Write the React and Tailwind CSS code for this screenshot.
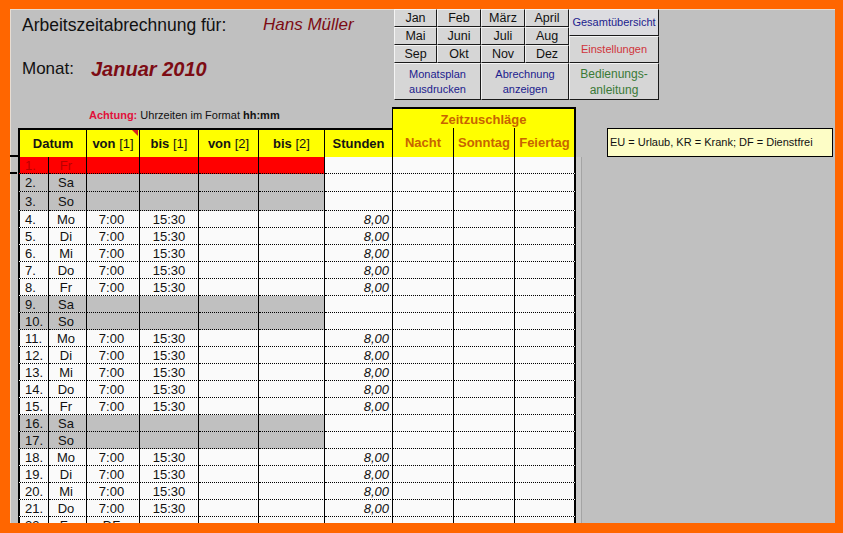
import React from "react";

const COLW = ["w-[31px]", "w-[38px]", "w-[53px]", "w-[59px]", "w-[60px]", "w-[66px]", "w-[68px]", "w-[61px]", "w-[61px]", "w-[61px]"];

const work = (n, d) => ({ n, d, v: "7:00", b: "15:30", s: "8,00" });
const rows = [
  { n: "1.", d: "Fr", t: "red", h: "h-[17px]" },
  { n: "2.", d: "Sa", t: "we", h: "h-[18px]" },
  { n: "3.", d: "So", t: "we", h: "h-[19px]" },
  work("4.", "Mo"),
  work("5.", "Di"),
  work("6.", "Mi"),
  work("7.", "Do"),
  work("8.", "Fr"),
  { n: "9.", d: "Sa", t: "we" },
  { n: "10.", d: "So", t: "we" },
  work("11.", "Mo"),
  work("12.", "Di"),
  work("13.", "Mi"),
  work("14.", "Do"),
  work("15.", "Fr"),
  { n: "16.", d: "Sa", t: "we" },
  { n: "17.", d: "So", t: "we" },
  work("18.", "Mo"),
  work("19.", "Di"),
  work("20.", "Mi"),
  work("21.", "Do"),
  { n: "22.", d: "Fr", v: "DF" },
];

function Btn({ className = "", children }) {
  return (
    <div
      className={
        "flex items-center justify-center text-center bg-[#d6d6d6] border-t border-l border-t-[#f4f4f4] border-l-[#f4f4f4] border-r border-b border-r-[#1a1a1a] border-b-[#1a1a1a] " +
        className
      }
    >
      {children}
    </div>
  );
}

function ButtonPanel() {
  const months = ["Jan", "Feb", "März", "April", "Mai", "Juni", "Juli", "Aug", "Sep", "Okt", "Nov", "Dez"];
  return (
    <div className="flex w-[265px] h-[91px] ml-[1px]">
      <div className="flex flex-col w-[175px]">
        <div className="grid grid-cols-[43px_44px_44px_44px] grid-rows-[18px_18px_18px]">
          {months.map((m) => (
            <Btn key={m} className="text-[12.5px] leading-[14px] text-[#111]">
              {m}
            </Btn>
          ))}
        </div>
        <div className="flex h-[37px]">
          <Btn className="w-[87px] text-[11px] leading-[15px] text-[#1c1c8e]">
            Monatsplan
            <br />
            ausdrucken
          </Btn>
          <Btn className="w-[88px] text-[11px] leading-[15px] text-[#1c1c8e]">
            Abrechnung
            <br />
            anzeigen
          </Btn>
        </div>
      </div>
      <div className="flex flex-col w-[90px]">
        <Btn className="h-[27px] text-[11px] text-[#1c1c8e] bg-[#dcdce0]">Gesamtübersicht</Btn>
        <Btn className="h-[27px] text-[11px] text-[#d0343a]">Einstellungen</Btn>
        <Btn className="h-[37px] text-[12px] leading-[16px] text-[#3a7a36]">
          Bedienungs-
          <br />
          anleitung
        </Btn>
      </div>
    </div>
  );
}

function Row({ r, idx }) {
  const left = r.t === "red" ? "bg-[#ff0000]" : r.t === "we" ? "bg-[#c0c0c0]" : "bg-[#fafafa]";
  const txt = r.t === "red" ? "text-[#b80000]" : "text-[#111]";
  const base =
    "shrink-0 flex items-center border-r border-r-black [border-bottom:1px_dotted_#000] text-[13px] leading-[15px] ";
  const vals = [r.n, r.d, r.v, r.b, "", "", r.s, "", "", ""];
  return (
    <div className={"flex shrink-0 " + (r.h || "h-[17px]")}>
      <div className={"w-[8px] shrink-0 " + (idx === 0 ? "flex items-end" : "")}>
        {idx === 0 && <div className="w-[7px] h-[2px] bg-black" />}
      </div>
      {vals.map((v, i) => {
        const bg = i < 6 ? left : "bg-[#fafafa]";
        let align = "justify-center";
        if (i === 0) align = "justify-start pl-[5px] border-l-2 border-l-black";
        if (i === 1) align = "justify-center pr-[3px]";
        if (i === 2) align = "justify-center pr-[3px]";
        if (i === 6) align = "justify-end pr-[3px] italic";
        const last = i === 9 ? " border-r-2" : "";
        return (
          <div key={i} className={base + COLW[i] + " " + bg + " " + align + " " + txt + last}>
            {v}
          </div>
        );
      })}
      <div className="w-[6px] shrink-0 bg-[#c8c8c8] border-r border-r-[#a4a4a4]" />
    </div>
  );
}

export default function App() {
  const hdr = "shrink-0 flex items-center justify-center h-full bg-[#ffff00] border-r border-r-black text-[13px] font-bold ";
  const orange = "text-[#c86400]";
  return (
    <div className="w-[843px] h-[533px] bg-[#ff6600] pt-[9px] pl-[10px] pr-[8px] pb-[10px] font-['Liberation_Sans',Arial,sans-serif]">
      <div className="w-full h-full bg-[#c0c0c0] overflow-hidden flex flex-col shadow-[inset_1px_1px_0_#e8ddd2]">
        {/* top */}
        <div className="flex h-[98px] shrink-0">
          <div className="w-[383px] shrink-0 pl-[12px] pt-[6px] text-[#111]">
            <div className="flex text-[17.5px] leading-[20px]">
              <span className="w-[241px] shrink-0">Arbeitszeitabrechnung für:</span>
              <span className="italic text-[#7d0c14] text-[17px]">Hans Müller</span>
            </div>
            <div className="flex items-center mt-[22px] h-[24px]">
              <span className="w-[69px] shrink-0 text-[17px]">Monat:</span>
              <span className="italic font-bold text-[20px] text-[#7d0c14]">Januar 2010</span>
            </div>
          </div>
          <ButtonPanel />
        </div>

        {/* band */}
        <div className="flex h-[21px] shrink-0">
          <div className="w-[382px] shrink-0 pl-[79px] pt-[2px] text-[11px] leading-[13px] text-[#111]">
            <span className="font-bold text-[#e0103a]">Achtung:</span> Uhrzeiten im Format <span className="font-bold">hh:mm</span>
          </div>
          <div className={"w-[184px] shrink-0 bg-[#ffff00] border-t-2 border-l border-r-2 border-black flex justify-center pt-[1px] text-[13px] font-bold " + orange}>
            Zeitzuschläge
          </div>
        </div>

        {/* header */}
        <div className="flex h-[29px] shrink-0">
          <div className="w-[8px] shrink-0 flex items-end">
            <div className="w-[8px] h-[2px] bg-black" />
          </div>
          <div className="flex h-full text-[#151515]">
            <div className={hdr + "w-[69px] border-t-2 border-t-black border-l-2 border-l-black"}>Datum</div>
            <div className={hdr + "w-[53px] border-t-2 border-t-black relative"}>
              von<span className="font-normal">&nbsp;[1]</span>
              <span className="absolute top-0 right-[1px] w-0 h-0 border-l-[6px] border-l-transparent border-t-[6px] border-t-[#d42020]" />
            </div>
            <div className={hdr + "w-[59px] border-t-2 border-t-black"}>
              bis<span className="font-normal">&nbsp;[1]</span>
            </div>
            <div className={hdr + "w-[60px] border-t-2 border-t-black"}>
              von<span className="font-normal">&nbsp;[2]</span>
            </div>
            <div className={hdr + "w-[66px] border-t-2 border-t-black"}>
              bis<span className="font-normal">&nbsp;[2]</span>
            </div>
            <div className={hdr + "w-[68px] border-t-2 border-t-black"}>Stunden</div>
            <div className={hdr + "w-[61px] " + orange}>Nacht</div>
            <div className={hdr + "w-[61px] " + orange}>Sonntag</div>
            <div className={hdr + "w-[61px] border-r-2 " + orange}>Feiertag</div>
          </div>
          <div className="w-[31px] shrink-0" />
          <div className="w-[226px] shrink-0 h-full bg-[#fdfdc6] border border-black flex items-center pl-[2px] text-[11px] text-[#111]">
            EU = Urlaub, KR = Krank; DF = Dienstfrei
          </div>
        </div>

        {/* body */}
        <div className="flex flex-col">
          {rows.map((r, i) => (
            <Row key={i} r={r} idx={i} />
          ))}
        </div>
      </div>
    </div>
  );
}
